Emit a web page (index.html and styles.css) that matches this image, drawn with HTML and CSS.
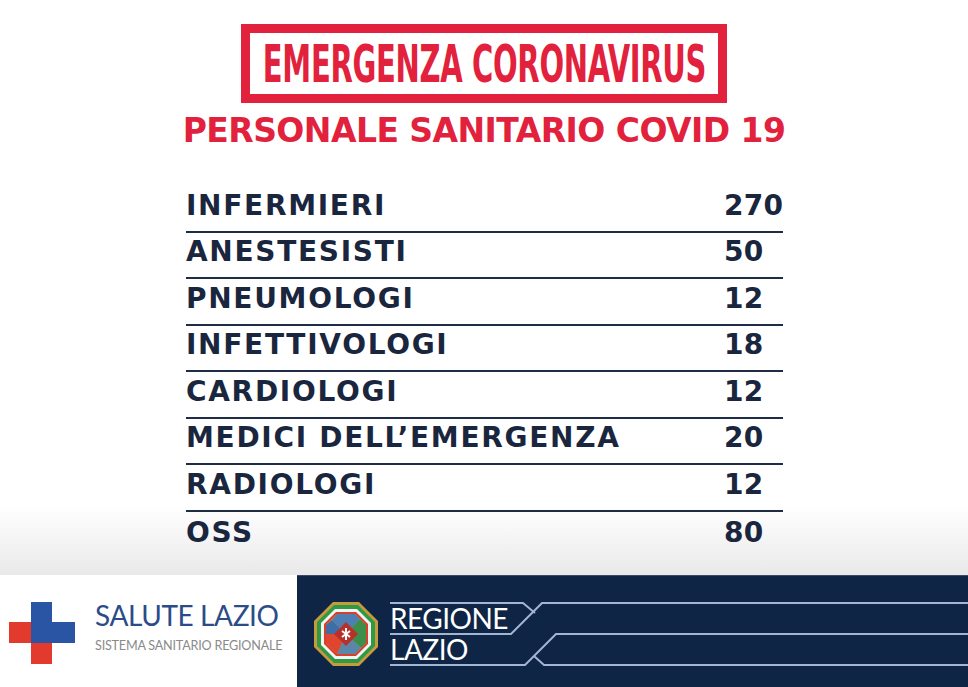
FILE: index.html
```html
<!DOCTYPE html>
<html lang="it">
<head>
<meta charset="utf-8">
<title>Emergenza Coronavirus - Personale sanitario COVID 19</title>
<link rel="stylesheet" href="styles.css">
</head>
<body>
<main class="sheet">
  <header class="head">
    <div class="badge"><span class="badge-text">EMERGENZA CORONAVIRUS</span></div>
    <h1 class="title">PERSONALE SANITARIO COVID 19</h1>
  </header>
  <section class="table">
    <div class="row"><span class="label">INFERMIERI</span><span class="num">270</span></div>
    <div class="row"><span class="label">ANESTESISTI</span><span class="num">50</span></div>
    <div class="row"><span class="label">PNEUMOLOGI</span><span class="num">12</span></div>
    <div class="row"><span class="label">INFETTIVOLOGI</span><span class="num">18</span></div>
    <div class="row"><span class="label">CARDIOLOGI</span><span class="num">12</span></div>
    <div class="row"><span class="label">MEDICI DELL’EMERGENZA</span><span class="num">20</span></div>
    <div class="row"><span class="label">RADIOLOGI</span><span class="num">12</span></div>
    <div class="row last"><span class="label">OSS</span><span class="num">80</span></div>
  </section>
</main>
<footer class="foot">
  <div class="salute">
    <svg class="cross" width="68" height="64" viewBox="0 0 68 64">
      <rect x="0" y="20" width="23" height="21" fill="#e23b2e"/>
      <rect x="22" y="40" width="21" height="22" fill="#e23b2e"/>
      <rect x="22" y="0" width="21" height="41" fill="#2a55a4"/>
      <rect x="22" y="20" width="44" height="21" fill="#2a55a4"/>
    </svg>
    <div class="salute-text">
      <div class="salute-name">SALUTE LAZIO</div>
      <div class="salute-sub">SISTEMA SANITARIO REGIONALE</div>
    </div>
  </div>
  <div class="regione">
    <svg class="emblem" width="66" height="66" viewBox="0 0 66 66">
      <polygon points="20,1 46,1 65,20 65,46 46,65 20,65 1,46 1,20" fill="#c99a3b"/>
      <polygon points="21,4 45,4 62,21 62,45 45,62 21,62 4,45 4,21" fill="#2f9a45"/>
      <polygon points="22,8 44,8 58,22 58,44 44,58 22,58 8,44 8,22" fill="#f4f4f4"/>
      <polygon points="23,11 43,11 55,23 55,43 43,55 23,55 11,43 11,23" fill="#d8402e"/>
      <polygon points="24,13 42,13 53,24 53,42 42,53 24,53 13,42 13,24" fill="#c99a3b"/>
      <polygon points="33,13 42,13 47,18 33,33 19,19 24,13" fill="#4d7fb5"/>
      <polygon points="47,18 53,24 53,42 48,47 33,33" fill="#3c8f4b"/>
      <polygon points="48,47 42,53 24,53 33,33" fill="#5a86a8"/>
      <polygon points="24,53 13,42 13,33 33,33" fill="#e0452f"/>
      <polygon points="13,33 13,24 19,19 33,33" fill="#3e6ea5"/>
      <polygon points="33,21 45,33 33,45 21,33" fill="#b8302a"/>
      <path d="M29,30 L37,36 M37,30 L29,36 M33,27 L33,39" stroke="#ffffff" stroke-width="2"/>
    </svg>
    <div class="regione-mark">
      <svg class="stripes" width="578" height="68" viewBox="0 0 578 68" preserveAspectRatio="none">
        <g fill="none" stroke="#a4b5d2" stroke-width="2">
          <path d="M0,3 H133 L145,13"/>
          <path d="M0,34 H121 L152,3 H578"/>
          <path d="M578,34 H166 L135,65 H0"/>
          <path d="M144,56 L154,65 H578"/>
        </g>
      </svg>
      <div class="regione-text">
        <div class="regione-line">REGIONE</div>
        <div class="regione-line">LAZIO</div>
      </div>
    </div>
  </div>
</footer>
</body>
</html>
```

FILE: styles.css
```css
* { box-sizing: border-box; }
html, body { margin: 0; padding: 0; }
body {
  width: 968px;
  height: 687px;
  overflow: hidden;
  background: #ffffff;
  font-family: "Open Sans", "DejaVu Sans", sans-serif;
}
.sheet {
  height: 575px;
  background: linear-gradient(to bottom, #ffffff 0, #ffffff 505px, #e9e9e9 575px);
  display: flex;
  flex-direction: column;
  align-items: center;
  padding-top: 24px;
}
.head {
  display: flex;
  flex-direction: column;
  align-items: center;
}
.badge {
  width: 486px;
  height: 79px;
  border: 9px solid #e2213d;
  display: flex;
  align-items: center;
  justify-content: center;
}
.badge-text {
  display: inline-block;
  font-family: "DejaVu Sans Condensed", "DejaVu Sans", sans-serif;
  font-weight: bold;
  font-size: 52px;
  line-height: 1;
  color: #e2213d;
  white-space: nowrap;
  transform: scaleX(0.62);
  letter-spacing: -0.5px;
}
.title {
  margin: 8px 0 0 0;
  font-family: "DejaVu Sans", sans-serif;
  font-weight: bold;
  font-size: 33px;
  line-height: 40px;
  letter-spacing: -0.55px;
  color: #e2213d;
  white-space: nowrap;
}
.table {
  width: 597px;
  margin-top: 35px;
  margin-left: 1px;
  display: flex;
  flex-direction: column;
}
.row {
  display: grid;
  grid-template-columns: 1fr 58px;
  align-items: end;
  height: 46.5px;
  padding-bottom: 10px;
  border-bottom: 2px solid #1f2c45;
  font-family: "DejaVu Sans", sans-serif;
  font-weight: 600;
  font-size: 28px;
  line-height: 30px;
  color: #1a263e;
  letter-spacing: 1.7px;
}
.row.last { border-bottom: none; }
.num { white-space: nowrap; letter-spacing: 0.3px; margin-left: -1px; }
.foot {
  height: 112px;
  display: flex;
}
.salute {
  width: 297px;
  background: #ffffff;
  display: flex;
  align-items: flex-start;
  padding: 27px 0 0 9px;
  gap: 18px;
}
.salute-text {
  display: flex;
  flex-direction: column;
  margin-top: -3px;
}
.salute-name {
  font-family: "Lato", "Liberation Sans", sans-serif;
  font-size: 28px;
  line-height: 32px;
  color: #2b4c88;
  letter-spacing: -0.4px;
}
.salute-sub {
  margin-top: 8px;
  font-family: "Lato", "Liberation Sans", sans-serif;
  font-size: 12.6px;
  line-height: 14px;
  color: #8a8a8a;
  letter-spacing: -0.2px;
}
.regione {
  flex: 1;
  background: #0f2545;
  border-top: 1px solid #3a4a66;
  display: flex;
  align-items: flex-start;
  padding: 24px 0 0 16px;
  gap: 11px;
}
.emblem { flex: none; margin-top: 1px; }
.regione-mark {
  position: relative;
  flex: 1;
  height: 68px;
}
.stripes {
  position: absolute;
  left: 0;
  top: 0;
}
.regione-text {
  position: relative;
  display: flex;
  flex-direction: column;
  padding-top: 3px;
}
.regione-line {
  font-family: "Lato", "Liberation Sans", sans-serif;
  font-size: 28px;
  line-height: 31px;
  color: #ffffff;
  letter-spacing: -0.5px;
}
```
